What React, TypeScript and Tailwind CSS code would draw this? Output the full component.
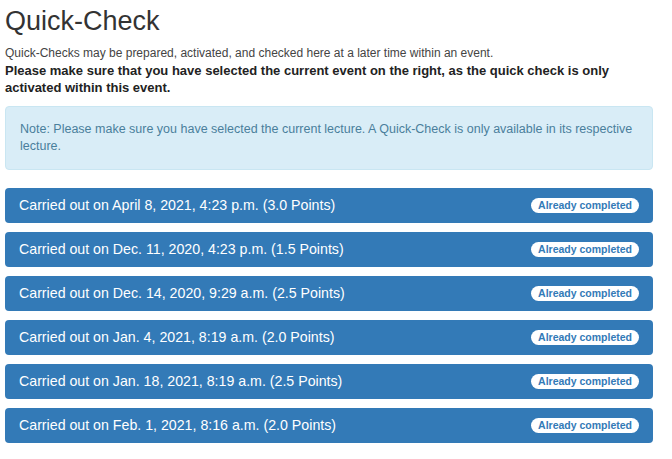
const items = [
  "Carried out on April 8, 2021, 4:23 p.m. (3.0 Points)",
  "Carried out on Dec. 11, 2020, 4:23 p.m. (1.5 Points)",
  "Carried out on Dec. 14, 2020, 9:29 a.m. (2.5 Points)",
  "Carried out on Jan. 4, 2021, 8:19 a.m. (2.0 Points)",
  "Carried out on Jan. 18, 2021, 8:19 a.m. (2.5 Points)",
  "Carried out on Feb. 1, 2021, 8:16 a.m. (2.0 Points)",
];

export default function App() {
  return (
    <div className="w-[672px] h-[459px] bg-white overflow-hidden pl-[5px] pr-[19px] font-['Liberation_Sans',Arial,sans-serif] text-[#333]">
      <h1 className="pt-[5px] text-[27px] leading-[32px] text-[#333]">Quick-Check</h1>
      <div className="mt-[8px] leading-[17px]">
        <p className="text-[12px] text-[#444]">
          Quick-Checks may be prepared, activated, and checked here at a later time within an event.
        </p>
        <p className="text-[13px] font-bold text-[#222]">
          Please make sure that you have selected the current event on the right, as the quick check is only activated within this event.
        </p>
      </div>
      <div className="mt-[10px] rounded-[4px] border border-[#c9e6f2] bg-[#d9edf7] px-[14px] pt-[14px] pb-[14px] text-[12.5px] leading-[17px] text-[#4a7f9c]">
        Note: Please make sure you have selected the current lecture. A Quick-Check is only available in its respective lecture.
      </div>
      <div className="mt-[18px] flex flex-col gap-[9px]">
        {items.map((t) => (
          <div
            key={t}
            className="flex h-[35px] items-center justify-between rounded-[4px] bg-[#337ab7] pl-[14px] pr-[14px] text-[14.2px] text-white"
          >
            <span>{t}</span>
            <span className="rounded-full bg-white px-[7px] text-[10.5px] leading-[15px] font-bold text-[#337ab7]">
              Already completed
            </span>
          </div>
        ))}
      </div>
    </div>
  );
}
